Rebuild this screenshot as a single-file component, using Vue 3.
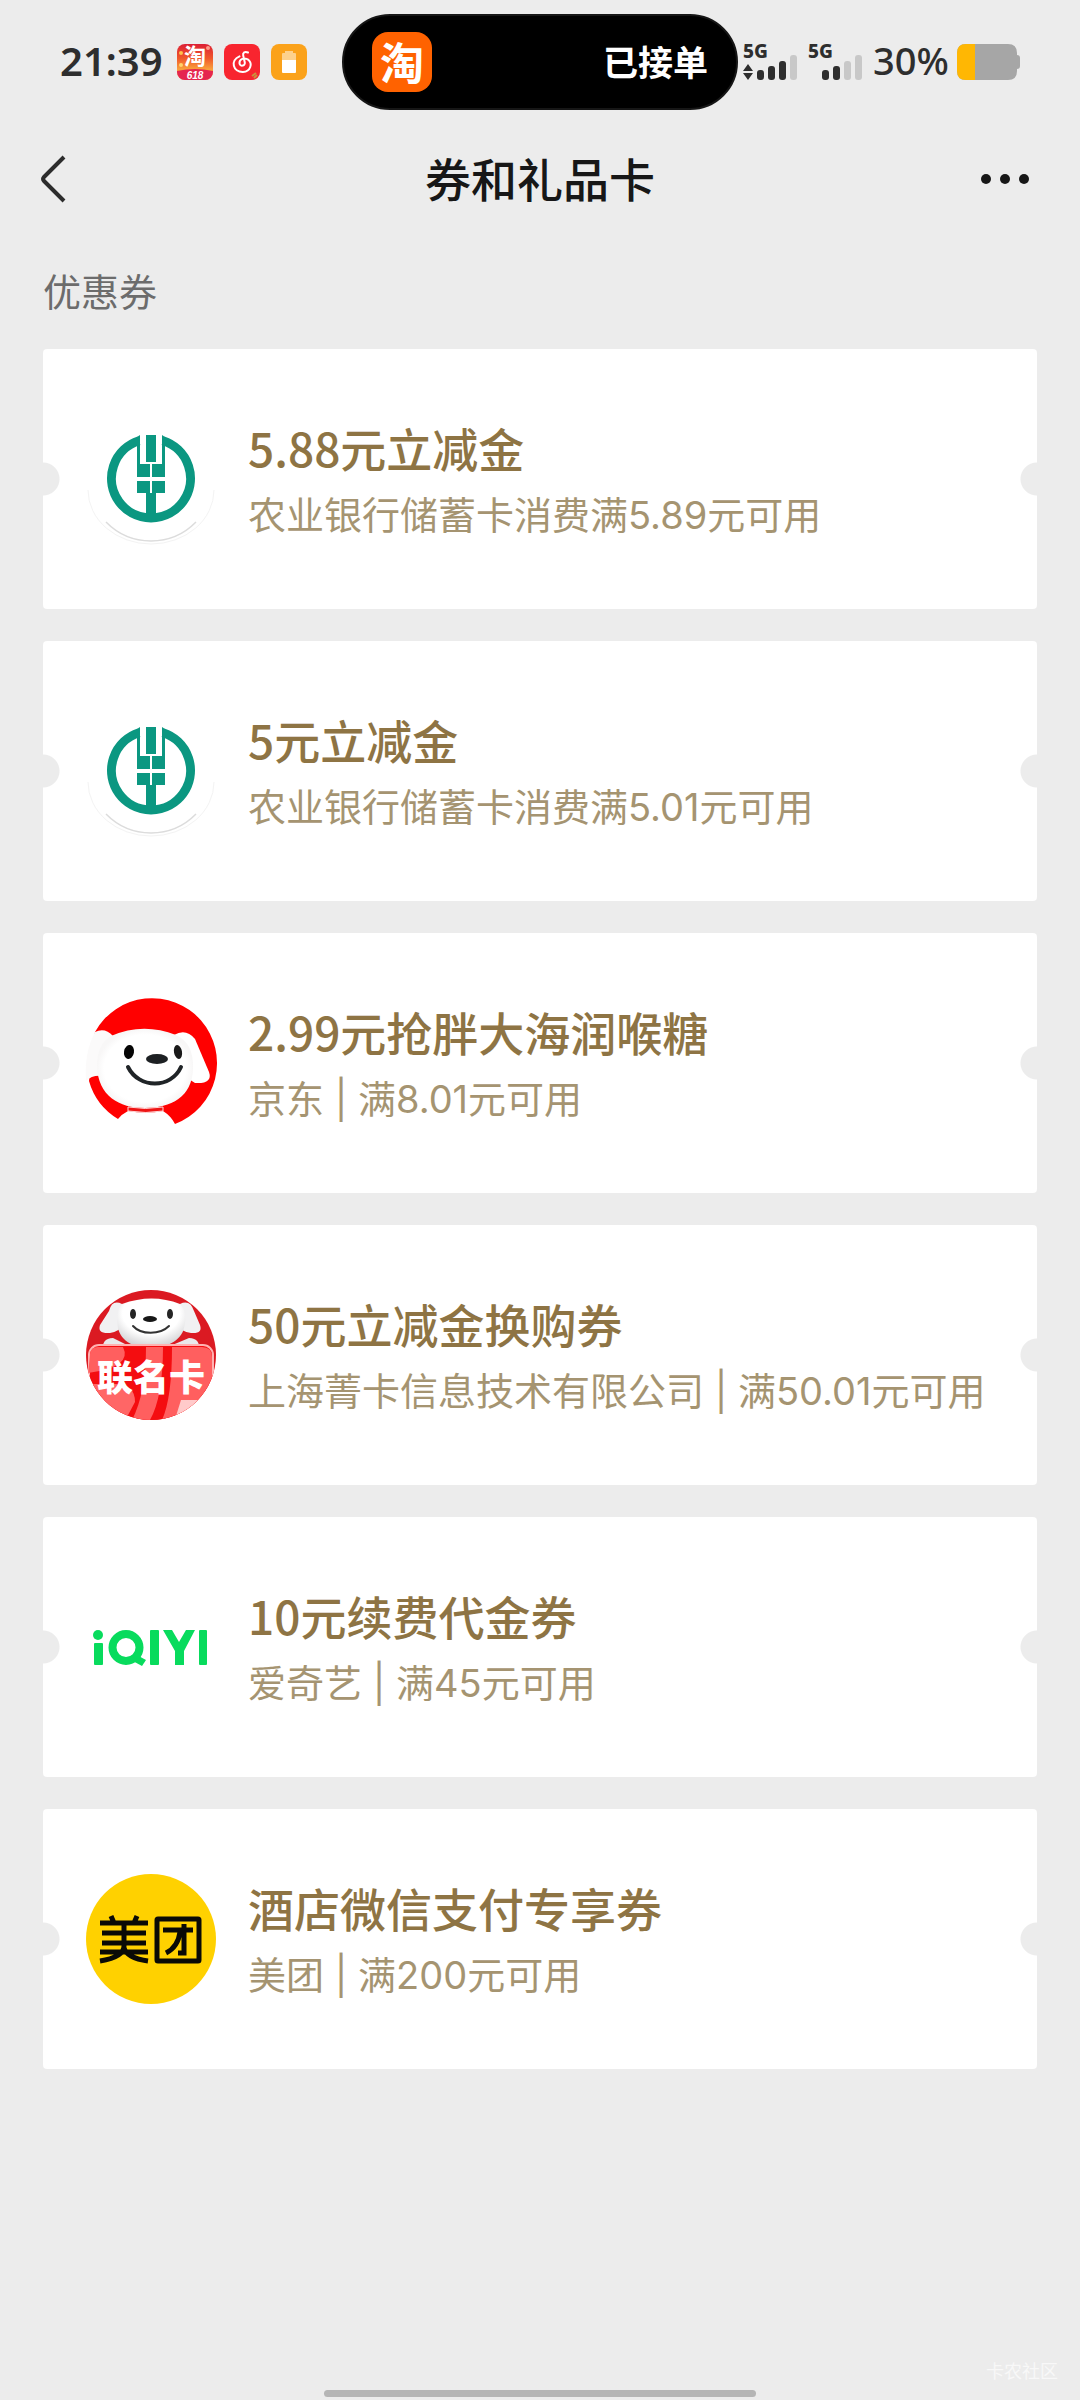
<script setup>
const coupons = [
  { logo: 'abc', title: '5.88元立减金', note: '农业银行储蓄卡消费满5.89元可用' },
  { logo: 'abc', title: '5元立减金', note: '农业银行储蓄卡消费满5.01元可用' },
  { logo: 'jd', title: '2.99元抢胖大海润喉糖', note: '京东 | 满8.01元可用' },
  { logo: 'joint', title: '50元立减金换购券', note: '上海菁卡信息技术有限公司 | 满50.01元可用' },
  { logo: 'iqiyi', title: '10元续费代金券', note: '爱奇艺 | 满45元可用' },
  { logo: 'meituan', title: '酒店微信支付专享券', note: '美团 | 满200元可用' }
]
</script>

<template>
  <div class="page">
    <header class="status">
      <div class="status-left">
        <time class="clock">21:39</time>
        <svg class="app" viewBox="0 0 36 36" aria-label="淘宝">
          <defs>
            <linearGradient id="sale" x1="0" y1="0" x2="0" y2="1">
              <stop offset="0" stop-color="#dc1f35" />
              <stop offset="0.4" stop-color="#f0582a" />
              <stop offset="0.7" stop-color="#f9a03c" />
            </linearGradient>
            <clipPath id="saleClip"><rect width="36" height="36" rx="8" /></clipPath>
          </defs>
          <g clip-path="url(#saleClip)">
            <rect width="36" height="36" fill="url(#sale)" />
            <path d="M0 27q18-4 36 0v9H0z" fill="#e5264f" />
            <circle cx="4" cy="9" r="2" fill="#ffc04a" /><circle cx="31" cy="4" r="2" fill="#ff9a8a" />
            <circle cx="4" cy="21" r="2" fill="#ffd36a" />
          </g>
          <text x="18" y="20" text-anchor="middle" font-size="22" font-weight="700" fill="#fff">淘</text>
          <text class="sale-label" x="18" y="35" text-anchor="middle">618</text>
        </svg>
        <svg class="app" viewBox="0 0 36 36" aria-hidden="true">
          <rect width="36" height="36" rx="8" fill="#f8252f" />
          <path d="M24 8.500c-3-1.500-5.500 0-4.800 3l1.600 7c.6 3.500-4.800 4.500-5.300.8-.5-4 5-6.500 9-3.400 4 3.400 2.500 11.600-5.500 12.100-10 .3-13.200-11.500-3.500-15.700" fill="none" stroke="#fff" stroke-width="2" stroke-linecap="round" />
          <path d="M28 32l4-3M30 34l3-3" stroke="#c9923e" stroke-width="2" />
        </svg>
        <svg class="app" viewBox="0 0 36 36" aria-hidden="true">
          <rect width="36" height="36" rx="8" fill="#fba21a" />
          <path d="M11 10q0-1 1-1h2V7h8v2h2q1 0 1 1v7H11z" fill="#fdd18c" />
          <path d="M11 16h14v12q0 1-1 1H12q-1 0-1-1z" fill="#fff" />
        </svg>
      </div>
      <div class="island">
        <span class="taobao">淘</span>
        <span class="order">已接单</span>
      </div>
      <div class="status-right">
        <svg class="signal" viewBox="0 0 54 40" aria-label="5G">
          <text class="net" x="0" y="16">5G</text>
          <path d="M0 29l5-7 5 7zM0 31h10l-5 7z" fill="#2e2e2e" />
          <g fill="#2e2e2e"><rect x="14" y="28" width="7" height="10" rx="3" /><rect x="25" y="24" width="7" height="14" rx="3" /><rect x="36" y="19" width="7" height="19" rx="3" /></g>
          <rect x="47" y="13" width="7" height="25" rx="3" fill="#c8c8c8" />
        </svg>
        <svg class="signal" viewBox="0 0 54 40" aria-label="5G">
          <text class="net" x="0" y="16">5G</text>
          <g fill="#2e2e2e"><rect x="14" y="28" width="7" height="10" rx="3" /><rect x="25" y="24" width="7" height="14" rx="3" /></g>
          <g fill="#c8c8c8"><rect x="36" y="19" width="7" height="19" rx="3" /><rect x="47" y="13" width="7" height="25" rx="3" /></g>
        </svg>
        <span class="percent">30%</span>
        <svg class="battery" viewBox="0 0 64 36" aria-hidden="true">
          <path d="M9 0h42q9 0 9 9v2q3 0 3 3v8q0 3-3 3v2q0 9-9 9H9q-9 0-9-9V9q0-9 9-9z" fill="#a6a6a6" />
          <path d="M9 0h9v36H9q-9 0-9-9V9q0-9 9-9z" fill="#ffb703" />
        </svg>
      </div>
    </header>

    <nav class="nav">
      <button class="icon-button" aria-label="返回">
        <svg width="28" height="48" viewBox="0 0 28 48"><path d="M24 2L4 22q-2 2 0 4l20 20" fill="none" stroke="#2c2c2c" stroke-width="4" /></svg>
      </button>
      <h1>券和礼品卡</h1>
      <button class="icon-button" aria-label="更多">
        <svg width="50" height="12" viewBox="0 0 50 12" fill="#171717"><circle cx="6" cy="6" r="5" /><circle cx="25" cy="6" r="5" /><circle cx="44" cy="6" r="5" /></svg>
      </button>
    </nav>

    <main class="content">
      <h2>优惠券</h2>
      <ul class="list">
        <li v-for="coupon in coupons" :key="coupon.title" class="card">
          <svg v-if="coupon.logo === 'abc'" class="logo" viewBox="0 0 130 130" aria-hidden="true">
            <path d="M2 76a63 54 0 0 0 126 0" fill="none" stroke="#f3f3f3" stroke-width="1" />
            <path d="M20 108a63 63 0 0 0 90 0" fill="none" stroke="#dcdcdc" stroke-width="1.500" />
            <path d="M53 26.800a39.500 39.500 0 1 0 24 0" fill="none" stroke="#0b9781" stroke-width="9" />
            <g fill="#0b9781">
              <path d="M51 23l3-2v29h10v13H51zM79 23l-3-2v29H66v13h13z" />
              <path d="M51 67h13v12H51zM66 67h13v12H66zM60 79h10v26H60z" />
              <rect x="60" y="21" width="10" height="27" />
            </g>
          </svg>

          <svg v-else-if="coupon.logo === 'jd'" class="logo" viewBox="0 0 130 130" aria-hidden="true">
            <defs>
              <radialGradient id="puppy"><stop offset="0.85" stop-color="#fff" /><stop offset="1" stop-color="#f8f7f7" /></radialGradient>
            </defs>
            <path d="M9 34A65 65 0 1 1 89 126q-4-8-12-13H42q-6 3-10 8A65 65 0 0 1 3 83z" fill="#f00" />
            <path d="M9 34q10-5 18 4L16 78Q6 77 0 83q-2-28 9-49z" fill="#fbfafa" />
            <path d="M88 37q12-7 21 4l14 33q4 12-14 11L98 78z" fill="#fff" />
            <path d="M25 38Q57 24 90 37q18 8 17 34c-1 28-22 39-48 39S12 98 11 68q0-22 14-30z" fill="url(#puppy)" />
            <ellipse cx="43" cy="54" rx="5" ry="7" transform="rotate(10 43 54)" fill="#050505" />
            <ellipse cx="92" cy="54" rx="4" ry="7" transform="rotate(-10 92 54)" fill="#191919" />
            <ellipse cx="71" cy="61" rx="11" ry="5" fill="#1d2023" />
            <path d="M42 69c11 22 43 22 53 0" fill="none" stroke="#202427" stroke-width="4" stroke-linecap="round" />
            <path d="M42 109q17 3 35 0v4q-17 3-35 0z" fill="#ee1414" stroke="#ffd8d8" stroke-width="1" />
          </svg>

          <svg v-else-if="coupon.logo === 'joint'" class="logo" viewBox="0 0 130 130" aria-label="联名卡">
            <defs>
              <clipPath id="jointClip"><circle cx="65" cy="65" r="65" /></clipPath>
              <radialGradient id="head" cx="0.5" cy="0.3" r="0.7"><stop offset="0.6" stop-color="#fff" /><stop offset="1" stop-color="#cfcfd1" /></radialGradient>
            </defs>
            <g clip-path="url(#jointClip)">
              <rect width="130" height="130" fill="#db1a22" />
              <path d="M17 62q-2-14 10-14l16 8v4zM113 62q2-14-10-14L84 56v4z" fill="#e9e9eb" />
              <path d="M36 14q-10-5-13 7L14 35q-3 9 10 8 9-1 14-9zM94 14q10-5 14 7l6 14q3 9-9 8-10-1-15-9z" fill="#f1f1f2" />
              <path d="M36 14q30-11 58 0 8 8 4 24c-6 26-60 28-66 0q-3-16 4-24z" fill="url(#head)" />
              <ellipse cx="47" cy="24" rx="3" ry="5" fill="#252525" /><ellipse cx="84" cy="24" rx="3" ry="5" fill="#252525" />
              <ellipse cx="64" cy="29" rx="7" ry="3" fill="#171717" />
              <path d="M47 36c8 9 27 9 36 0" fill="none" stroke="#333" stroke-width="2" stroke-linecap="round" />
              <rect x="3" y="55" width="124" height="90" rx="10" fill="#f40d10" stroke="#ffb2b2" stroke-width="2" />
              <path d="M60 57h17q0 50-13 73H46q14-27 14-73zM86 57h30q10 0 10 10v43q-16 0-22 20H76q10-22 10-73z" fill="#ff5f5f" />
              <path d="M4 65q0-8 8-8h25q10 20-35 26z" fill="#ff5f5f" />
              <path d="M5 94h24q20 0 20 18l-8 15L11 112z" fill="#ff6666" />
              <path d="M95 110h22l-15 18-12-2z" fill="#ffcaca" />
              <text x="65" y="101" text-anchor="middle" font-size="36" font-weight="900" fill="#fff">联名卡</text>
            </g>
          </svg>

          <svg v-else-if="coupon.logo === 'iqiyi'" class="logo" viewBox="0 0 130 130" aria-label="iQIYI">
            <g fill="#08db5d">
              <circle cx="12" cy="53" r="5" /><rect x="8" y="61" width="9" height="22" rx="1" />
              <rect x="64" y="48" width="9" height="35" rx="1" />
              <path d="M77 48h9l7 12 7-12h9L98 69v14h-9V69z" /><rect x="113" y="48" width="8" height="35" rx="1" />
              <path d="M49 72l11 6-4 6-11-6z" />
            </g>
            <circle cx="40" cy="65.500" r="13.500" fill="none" stroke="#08db5d" stroke-width="8" />
          </svg>

          <svg v-else class="logo" viewBox="0 0 130 130" aria-label="美团">
            <circle cx="65" cy="65" r="65" fill="#ffd100" />
            <g fill="none" stroke="#0a0a06" stroke-width="5">
              <path d="M25 42l3 7M51 42l-3 7M14 49h48M16 59h44M16 69h44M14 78h48M38 48v24q0 11-24 15M38 74q3 10 24 13" />
              <rect x="71" y="45" width="42" height="42" rx="1" />
              <path d="M77 56h30M98 50v29h-6M94 58q-2 15-14 21" />
            </g>
          </svg>

          <div class="text">
            <h3>{{ coupon.title }}</h3>
            <p>{{ coupon.note }}</p>
          </div>
        </li>
      </ul>
    </main>

    <footer class="footer">
      <span class="watermark">卡农社区</span>
      <span class="home-bar"></span>
    </footer>
  </div>
</template>

<style>
body {
  background: #ececec;
}
</style>

<style scoped>
.page {
  min-height: 100vh;
  display: flex;
  flex-direction: column;
  background: #ececec;
  color: #171717;
  font-family: "Noto Sans CJK SC", sans-serif;
}
h1, h2, h3, p, ul {
  margin: 0;
  padding: 0;
}
svg {
  overflow: visible;
}
.status {
  display: grid;
  grid-template-columns: 1fr 396px 1fr;
  height: 124px;
  align-items: center;
  color: #2e2e2e;
  font-family: "Noto Sans", sans-serif;
}
.status-left {
  display: flex;
  align-items: center;
  padding-left: 60px;
  gap: 11px;
}
.clock,
.percent,
.order {
  padding-bottom: 4px;
}
.clock {
  margin-right: 3px;
  font-size: 40px;
  font-weight: 600;
}
.app {
  width: 36px;
  height: 36px;
  font-family: "Noto Sans CJK SC", sans-serif;
}
.sale-label {
  fill: #fff;
  font: italic 700 10px "Liberation Sans", sans-serif;
}
.island {
  display: flex;
  align-items: center;
  justify-content: space-between;
  box-sizing: border-box;
  height: 96px;
  padding: 0 28px;
  border: 2px solid #161616;
  border-radius: 48px;
  background: #000;
  color: #fff;
  font-family: "Noto Sans CJK SC", sans-serif;
}
.taobao {
  width: 60px;
  height: 60px;
  border-radius: 16px;
  background: #ff6200;
  font-size: 44px;
  line-height: 58px;
  font-weight: 700;
  text-align: center;
}
.order {
  font-size: 35px;
  font-weight: 700;
}
.status-right {
  display: flex;
  align-items: center;
  padding-left: 5px;
}
.signal {
  width: 54px;
  height: 40px;
  margin-right: 11px;
}
.net {
  font-size: 19px;
  font-weight: 800;
  fill: #2e2e2e;
}
.percent {
  font-size: 38px;
  font-weight: 500;
}
.battery {
  width: 64px;
  height: 36px;
  margin-left: 8px;
}
.nav {
  display: flex;
  align-items: center;
  justify-content: space-between;
  height: 110px;
  padding: 0 40px;
}
.icon-button {
  display: flex;
  width: 60px;
  padding: 0;
  border: 0;
  background: none;
}
h1 {
  padding-bottom: 4px;
  font-size: 46px;
  font-weight: 500;
}
.content {
  padding: 0 43px;
}
h2 {
  padding: 26px 0 30px;
  color: #6c6c6c;
  font-size: 38px;
  line-height: 59px;
  font-weight: 400;
}
.list {
  display: flex;
  flex-direction: column;
  gap: 32px;
  list-style: none;
}
.card {
  display: flex;
  align-items: center;
  height: 260px;
  padding: 0 43px;
  gap: 32px;
  border-radius: 4px;
  background:
    radial-gradient(circle at 0 50%, #ececec 16px, transparent 17px),
    radial-gradient(circle at 100% 50%, #ececec 16px, transparent 17px),
    #fff;
}
.logo {
  flex: none;
  width: 130px;
  height: 130px;
}
.text {
  white-space: nowrap;
}
h3 {
  color: #8e7444;
  font-size: 46px;
  line-height: 72px;
  font-weight: 500;
}
p {
  color: #a59471;
  font-family: Inter, "Noto Sans CJK SC", sans-serif;
  font-size: 38px;
  line-height: 64px;
}
.footer {
  display: flex;
  flex-direction: column;
  align-items: center;
  gap: 8px;
  margin-top: auto;
  padding: 24px 0 3px;
}
.watermark {
  align-self: flex-end;
  margin-right: 22px;
  color: #f8f8f8;
  font-size: 18px;
  line-height: 24px;
}
.home-bar {
  width: 40%;
  height: 7px;
  border-radius: 4px;
  background: #b5b5b5;
}
</style>
